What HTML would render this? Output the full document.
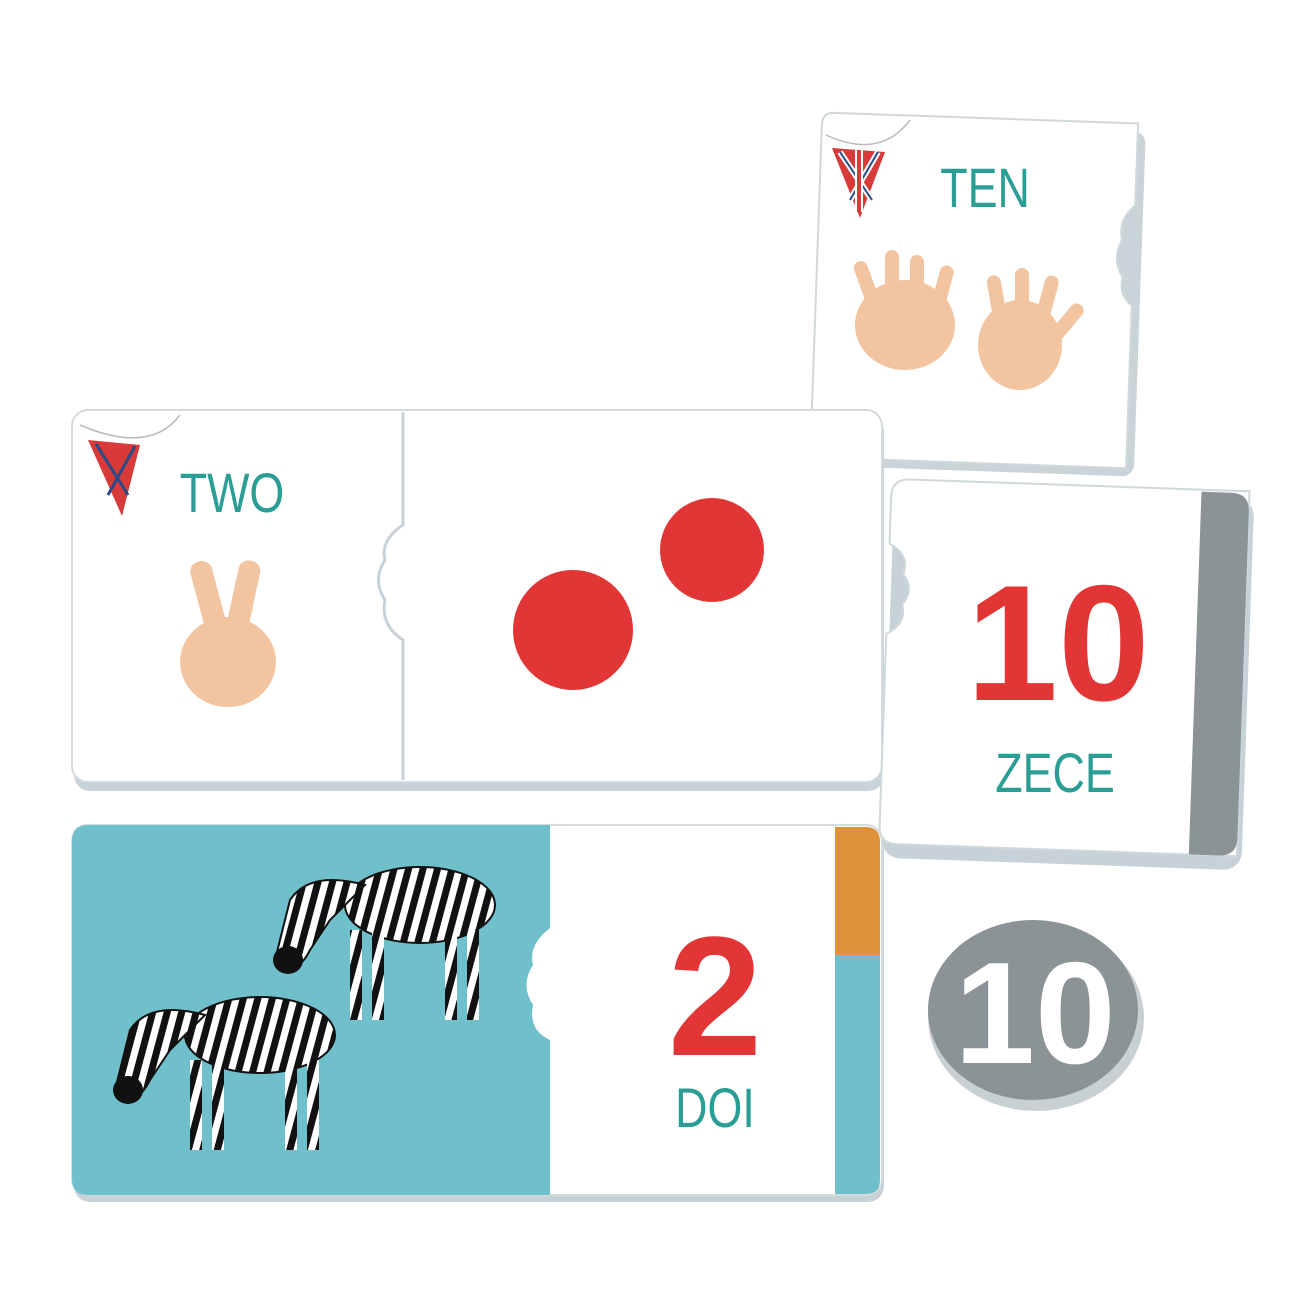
<!DOCTYPE html>
<html><head><meta charset="utf-8"><style>
html,body{margin:0;padding:0;background:#fff;width:1300px;height:1300px;overflow:hidden}
svg{display:block}
text{font-family:"Liberation Sans",sans-serif}
</style></head><body>
<svg width="1300" height="1300" viewBox="0 0 1300 1300">
<defs>
<pattern id="zs" width="14" height="14" patternUnits="userSpaceOnUse" patternTransform="rotate(15)">
<rect width="14" height="14" fill="#fff"/><rect width="7" height="14" fill="#111"/></pattern>
</defs>

<!-- TEN card -->
<g transform="rotate(2 978 295)">
<rect x="820" y="126" width="320" height="345" rx="12" fill="#c9d3d8"/>
<path d="M828,118 L1132,118 L1132,200 Q1115,215 1120,235 Q1110,255 1122,272 Q1118,290 1132,300 L1132,463 L828,463 Q816,463 816,451 L816,130 Q816,118 828,118 Z" fill="#fff" stroke="#d0d8dc" stroke-width="2"/>
</g>
<path d="M826,135 Q880,160 910,120" stroke="#bbb" stroke-width="1.5" fill="none"/>
<polygon points="832,148 885,152 860,218" fill="#d83a3a"/>
<path d="M840,152 L872,200 M878,152 L850,200" stroke="#fff" stroke-width="6"/>
<path d="M840,152 L872,200 M878,152 L850,200" stroke="#2a4a8a" stroke-width="2"/>
<path d="M859,150 L859,212" stroke="#fff" stroke-width="8"/><path d="M859,150 L859,212" stroke="#d83a3a" stroke-width="4"/>
<text x="0" y="0" font-size="56" fill="#2a9d94" text-anchor="middle" transform="translate(985 207) scale(0.8 1)">TEN</text>
<ellipse cx="905" cy="325" rx="50" ry="45" fill="#f3c4a0"/>
<rect x="860" y="260" width="14" height="50" rx="7" fill="#f3c4a0" transform="rotate(-20 867 285)"/>
<rect x="885" y="250" width="14" height="50" rx="7" fill="#f3c4a0"/>
<rect x="910" y="255" width="14" height="50" rx="7" fill="#f3c4a0"/>
<rect x="935" y="265" width="14" height="50" rx="7" fill="#f3c4a0" transform="rotate(15 942 290)"/>
<ellipse cx="1020" cy="345" rx="42" ry="45" fill="#f3c4a0"/>
<rect x="990" y="275" width="14" height="50" rx="7" fill="#f3c4a0" transform="rotate(-10 997 300)"/>
<rect x="1015" y="268" width="14" height="50" rx="7" fill="#f3c4a0"/>
<rect x="1040" y="275" width="14" height="50" rx="7" fill="#f3c4a0" transform="rotate(15 1047 300)"/>
<rect x="1060" y="300" width="14" height="45" rx="7" fill="#f3c4a0" transform="rotate(40 1067 322)"/>

<!-- TWO puzzle -->
<rect x="74" y="416" width="810" height="375" rx="16" fill="#c8d3d9"/>
<rect x="72" y="410" width="810" height="372" rx="16" fill="#fff" stroke="#d3dbdf" stroke-width="2"/>
<path d="M403,412 L403,525 Q380,540 385,560 Q372,580 385,600 Q380,625 403,640 L403,780" stroke="#c7d2d8" stroke-width="3" fill="none"/>
<path d="M80,425 Q150,455 180,415" stroke="#bbb" stroke-width="1.5" fill="none"/>
<polygon points="88,440 140,445 122,516" fill="#d83a3a"/>
<path d="M96,444 L128,495 M135,446 L108,495" stroke="#2a4a8a" stroke-width="3"/>
<text x="0" y="0" font-size="56" fill="#2a9d94" text-anchor="middle" transform="translate(232 512) scale(0.8 1)">TWO</text>
<rect x="198" y="560" width="22" height="70" rx="10" fill="#f3c4a0" transform="rotate(-15 210 600)"/>
<rect x="232" y="560" width="22" height="70" rx="10" fill="#f3c4a0" transform="rotate(12 243 600)"/>
<ellipse cx="228" cy="662" rx="48" ry="45" fill="#f3c4a0"/>
<circle cx="573" cy="630" r="60" fill="#e23636"/>
<circle cx="712" cy="550" r="52" fill="#e23636"/>

<!-- 10 ZECE card -->
<g transform="rotate(2 1065 675)">
<rect x="888" y="492" width="360" height="372" rx="18" fill="#c6d2d8"/>
<path d="M903,485 L1243,485 L1243,850 L903,850 Q885,850 885,832 L885,640 Q905,630 900,610 Q912,595 900,580 Q906,560 885,550 L885,503 Q885,485 903,485 Z" fill="#fff" stroke="#cfd8dc" stroke-width="2"/>
<path d="M1195,487 L1225,487 Q1243,487 1243,505 L1243,832 Q1243,850 1225,850 L1195,850 Z" fill="#8b9396"/>
</g>
<text x="1058" y="700" font-size="165" fill="#e23636" text-anchor="middle" font-weight="bold">10</text>
<text x="0" y="0" font-size="56" fill="#2a9d94" text-anchor="middle" transform="translate(1055 792) scale(0.8 1)">ZECE</text>

<!-- bottom puzzle -->
<rect x="74" y="830" width="810" height="372" rx="16" fill="#c6d2d8"/>
<rect x="72" y="825" width="810" height="370" rx="16" fill="#fff" stroke="#d3dbdf" stroke-width="2"/>
<path d="M88,825 L550,825 L550,928 Q528,945 533,965 Q520,985 533,1005 Q528,1030 550,1040 L550,1195 L88,1195 Q72,1195 72,1179 L72,841 Q72,825 88,825 Z" fill="#6fc0cb"/>
<path d="M835,827 L866,827 Q880,827 880,842 L880,955 L835,955 Z" fill="#e0923a"/>
<path d="M835,955 L880,955 L880,1180 Q880,1194 866,1194 L835,1194 Z" fill="#6fc0cb"/>
<text x="715" y="1055" font-size="170" fill="#e23636" text-anchor="middle" font-weight="bold">2</text>
<text x="0" y="0" font-size="56" fill="#2a9d94" text-anchor="middle" transform="translate(715 1127) scale(0.8 1)">DOI</text>
<!-- zebras -->
<g>
<ellipse cx="420" cy="905" rx="75" ry="38" fill="url(#zs)" stroke="#111" stroke-width="2"/>
<rect x="350" y="930" width="12" height="90" fill="url(#zs)"/><rect x="372" y="930" width="12" height="90" fill="url(#zs)"/>
<rect x="445" y="930" width="12" height="90" fill="url(#zs)"/><rect x="467" y="930" width="12" height="90" fill="url(#zs)"/>
<path d="M365,885 Q310,870 290,900 L275,960 Q295,980 310,950 L330,920 Z" fill="url(#zs)" stroke="#111" stroke-width="2"/>
<ellipse cx="288" cy="960" rx="15" ry="14" fill="#111"/>
</g>
<g>
<ellipse cx="260" cy="1035" rx="75" ry="38" fill="url(#zs)" stroke="#111" stroke-width="2"/>
<rect x="190" y="1060" width="12" height="90" fill="url(#zs)"/><rect x="212" y="1060" width="12" height="90" fill="url(#zs)"/>
<rect x="285" y="1060" width="12" height="90" fill="url(#zs)"/><rect x="307" y="1060" width="12" height="90" fill="url(#zs)"/>
<path d="M205,1015 Q150,1000 130,1030 L115,1090 Q135,1110 150,1080 L170,1050 Z" fill="url(#zs)" stroke="#111" stroke-width="2"/>
<ellipse cx="128" cy="1090" rx="15" ry="14" fill="#111"/>
</g>

<!-- coin -->
<ellipse cx="1036" cy="1018" rx="108" ry="93" fill="#c9d0d3"/>
<ellipse cx="1033" cy="1010" rx="105" ry="90" fill="#8b9396"/>
<text x="1035" y="1063" font-size="145" fill="#fff" text-anchor="middle" font-weight="bold">10</text>
</svg>
</body></html>
